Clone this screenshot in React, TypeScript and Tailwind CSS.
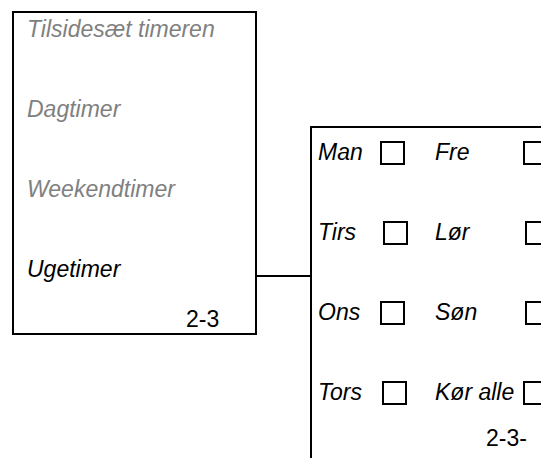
import React from "react";

const font = "font-['Liberation_Sans',Arial,sans-serif]";

function Box({ className = "" }: { className?: string }) {
  return <div className={`w-[25px] h-[24px] border-2 border-black shrink-0 ${className}`} />;
}

type Row = { a: string; aOff: string; b: string; bOff: string };

const rows: Row[] = [
  { a: "Man", aOff: "ml-0", b: "Fre", bOff: "ml-0" },
  { a: "Tirs", aOff: "ml-[3px]", b: "Lør", bOff: "ml-[2px]" },
  { a: "Ons", aOff: "ml-0", b: "Søn", bOff: "ml-[2px]" },
  { a: "Tors", aOff: "ml-[2px]", b: "Kør alle", bOff: "ml-0" },
];

export default function App() {
  return (
    <div className={`w-[541px] h-[458px] overflow-hidden bg-white text-[23px] leading-[26px] ${font}`}>
      <div className="flex items-start">
        <div className="ml-[12px] mt-[11px] w-[245px] h-[324px] border-2 border-black shrink-0 flex flex-col pl-[13px] pt-[3px]">
          <div className="flex flex-col gap-[54px] italic">
            <div className="text-[#808080]">Tilsidesæt timeren</div>
            <div className="text-[#808080]">Dagtimer</div>
            <div className="text-[#808080]">Weekendtimer</div>
            <div className="text-black">Ugetimer</div>
          </div>
          <div className="mt-[24px] pl-[159px] text-black">2-3</div>
        </div>
        <div className="mt-[275px] w-[53px] h-[2px] bg-black shrink-0" />
        <div className="mt-[126px] w-[300px] h-[400px] border-2 border-black shrink-0 pl-[6px] pt-[11px]">
          <div className="flex flex-col gap-[54px]">
            {rows.map((r) => (
              <div key={r.a} className="flex items-start h-[26px]">
                <div className="w-[62px] shrink-0 italic">{r.a}</div>
                <div className="w-[55px] shrink-0 flex">
                  <Box className={`mt-[2px] ${r.aOff}`} />
                </div>
                <div className="w-[88px] shrink-0 italic whitespace-nowrap">{r.b}</div>
                <Box className={`mt-[2px] ${r.bOff}`} />
              </div>
            ))}
          </div>
          <div className="mt-[20px] pl-[168px]">2-3-</div>
        </div>
      </div>
    </div>
  );
}
